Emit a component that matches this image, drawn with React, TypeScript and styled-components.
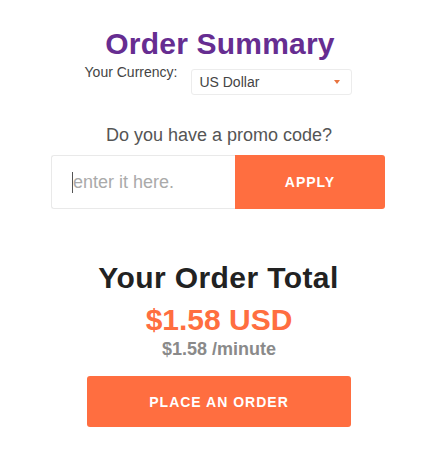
import React from 'react'
import styled, { createGlobalStyle } from 'styled-components'

const GlobalStyle = createGlobalStyle`
  html, body {
    margin: 0;
    padding: 0;
    background: #ffffff;
  }
  body {
    font-family: 'Liberation Sans', Arial, Helvetica, sans-serif;
  }
`

const ORANGE = '#ff6e40'

const Wrapper = styled.div`
  width: 440px;
  height: 454px;
  display: flex;
  flex-direction: column;
  align-items: center;
  padding-top: 27px;
  box-sizing: border-box;
`

const Title = styled.h1`
  margin: 0;
  font-size: 30px;
  line-height: 34px;
  font-weight: 700;
  letter-spacing: 0.2px;
  color: #662d91;
`

const CurrencyRow = styled.div`
  display: flex;
  align-items: flex-start;
  gap: 14px;
  margin-top: 3px;
  margin-right: 3px;
`

const Label = styled.span`
  font-size: 14px;
  line-height: 16px;
  color: #444;
`

const Select = styled.div`
  margin-top: 5px;
  width: 161px;
  height: 26px;
  box-sizing: border-box;
  border: 1px solid #ececec;
  border-radius: 3px;
  display: flex;
  align-items: center;
  justify-content: space-between;
  padding: 0 11px 0 7px;
  font-size: 14px;
  color: #444;
`

const Caret = styled.span`
  width: 0;
  height: 0;
  border-left: 3.5px solid transparent;
  border-right: 3.5px solid transparent;
  border-top: 4px solid #e8733f;
`

const Question = styled.div`
  margin-top: 30px;
  margin-right: 2px;
  font-size: 18px;
  line-height: 20px;
  color: #555;
`

const PromoGroup = styled.div`
  margin-top: 10px;
  margin-right: 4px;
  display: flex;
  width: 334px;
  height: 54px;
`

const PromoInput = styled.div`
  flex: 1;
  box-sizing: border-box;
  border: 1px solid #e9e9e9;
  border-right: none;
  border-radius: 3px 0 0 3px;
  display: flex;
  align-items: center;
  padding-left: 20px;
  font-size: 18px;
  color: #aaa;
`

const Cursor = styled.span`
  width: 1px;
  height: 21px;
  background: #555;
`

const OrangeButton = styled.button<{ $width: number; $height: number }>`
  width: ${p => p.$width}px;
  height: ${p => p.$height}px;
  border: none;
  border-radius: ${p => (p.$width < 200 ? '0 3px 3px 0' : '3px')};
  background: ${ORANGE};
  color: #fff;
  font-family: inherit;
  font-size: 14px;
  font-weight: 700;
  letter-spacing: 1px;
  padding: 0;
  cursor: pointer;
`

const TotalTitle = styled.h2`
  margin: 52px 0 0;
  margin-right: 3px;
  font-size: 30px;
  line-height: 34px;
  font-weight: 700;
  letter-spacing: 0.4px;
  color: #222;
`

const Price = styled.div`
  margin-top: 8px;
  margin-right: 2px;
  font-size: 30px;
  line-height: 34px;
  font-weight: 700;
  color: ${ORANGE};
`

const Rate = styled.div`
  margin-top: 2px;
  margin-right: 2px;
  font-size: 18px;
  line-height: 20px;
  font-weight: 700;
  color: #8a8a8a;
`

const OrderButtonWrap = styled.div`
  margin-top: 17px;
  margin-right: 2px;
`

function App() {
  return (
    <>
      <GlobalStyle />
      <Wrapper>
        <Title>Order Summary</Title>
        <CurrencyRow>
          <Label>Your Currency:</Label>
          <Select>
            <span>US Dollar</span>
            <Caret />
          </Select>
        </CurrencyRow>
        <Question>Do you have a promo code?</Question>
        <PromoGroup>
          <PromoInput>
            <Cursor />
            <span>enter it here.</span>
          </PromoInput>
          <OrangeButton $width={150} $height={54}>
            APPLY
          </OrangeButton>
        </PromoGroup>
        <TotalTitle>Your Order Total</TotalTitle>
        <Price>$1.58 USD</Price>
        <Rate>$1.58 /minute</Rate>
        <OrderButtonWrap>
          <OrangeButton $width={264} $height={51}>
            PLACE AN ORDER
          </OrangeButton>
        </OrderButtonWrap>
      </Wrapper>
    </>
  )
}

export default App
